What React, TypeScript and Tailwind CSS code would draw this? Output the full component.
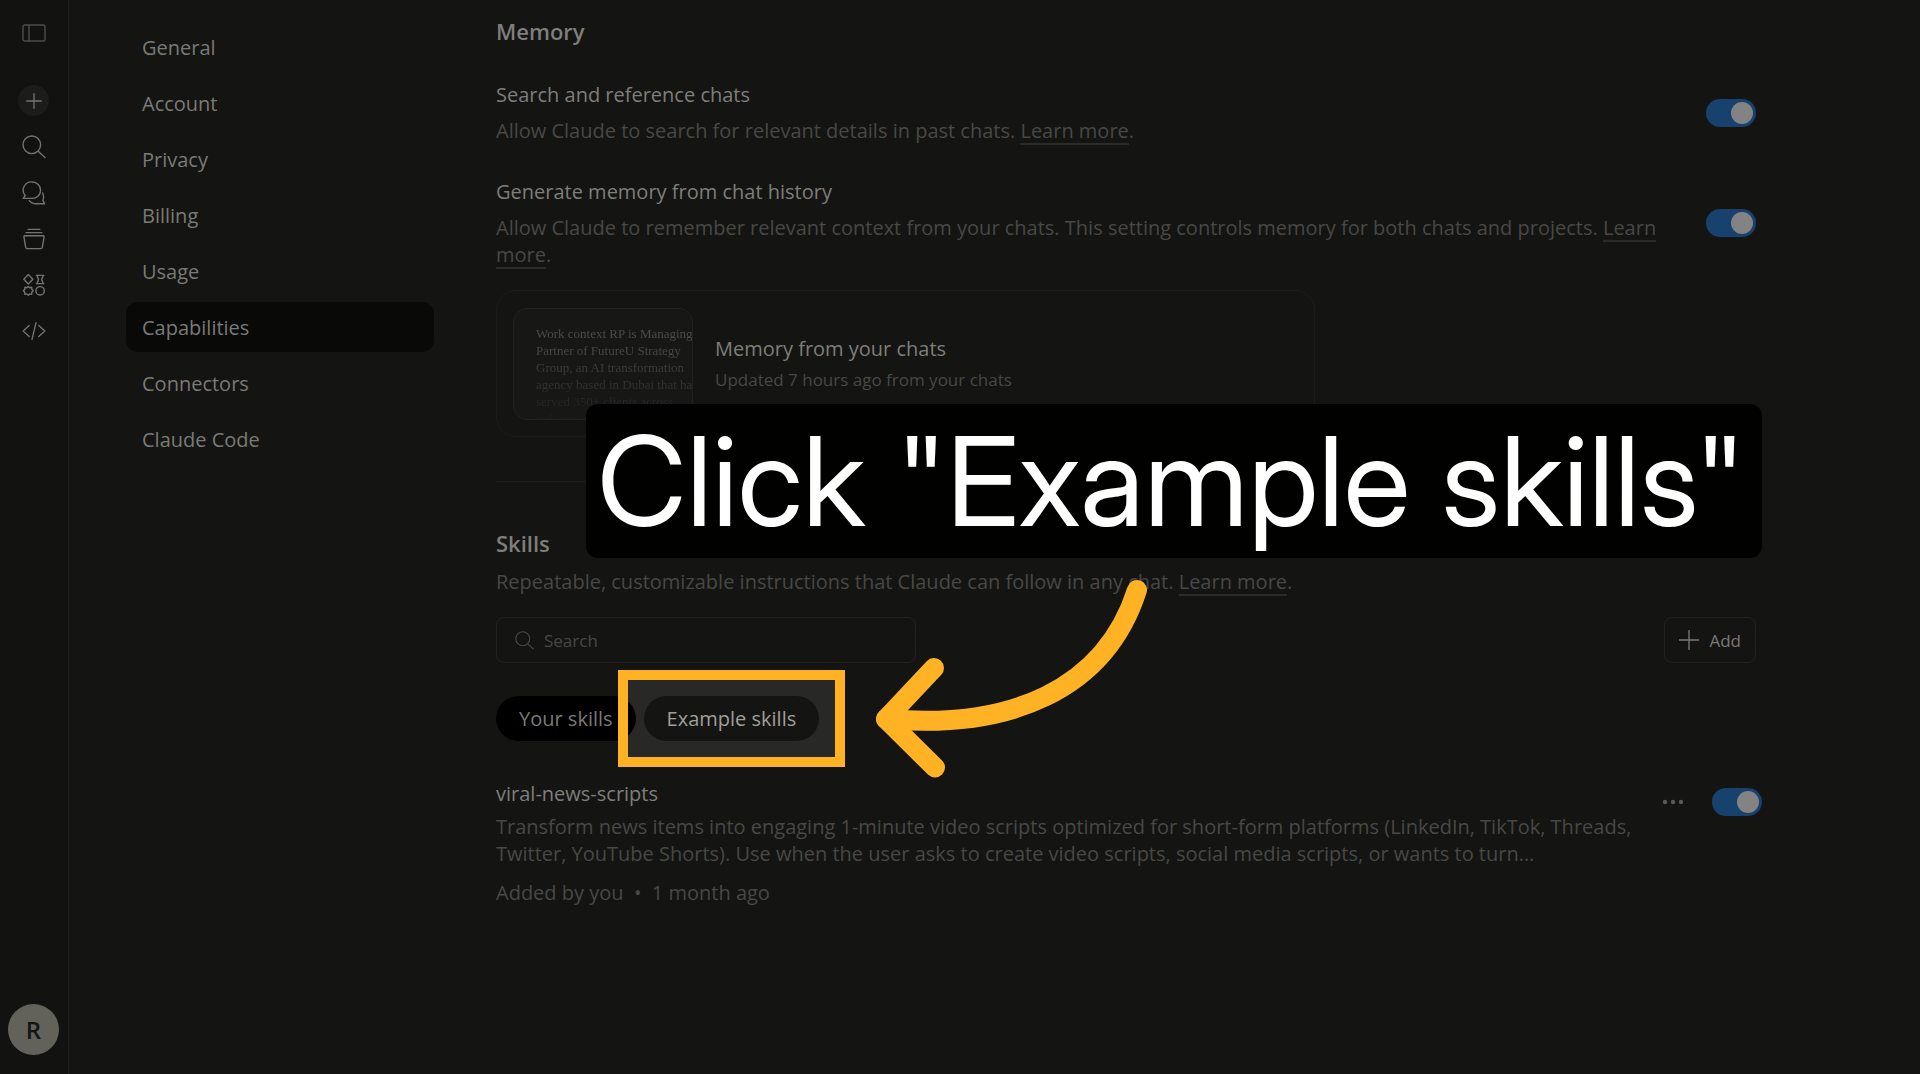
import { FC, ReactNode, useState } from "react";

const navItems = [
    "General",
    "Account",
    "Privacy",
    "Billing",
    "Usage",
    "Capabilities",
    "Connectors",
    "Claude Code",
];

const Icon: FC<{ children: ReactNode; className?: string }> = ({ children, className }) => (
    <svg
        viewBox="0 0 24 24"
        fill="none"
        stroke="currentColor"
        strokeWidth={1.4}
        strokeLinecap="round"
        strokeLinejoin="round"
        className={className ?? "size-6"}
        aria-hidden="true"
    >
        {children}
    </svg>
);

const SearchIcon: FC<{ className?: string }> = ({ className }) => (
    <Icon className={className}>
        <circle cx="9.8" cy="9.8" r="8.8" />
        <path d="M16.2 16.2 23 22.6" />
    </Icon>
);

const railItems = [
    {
        label: "Search",
        icon: <SearchIcon />,
    },
    {
        label: "Chats",
        icon: (
            <Icon>
                <path d="M10.4 1a8.2 8.2 0 1 1 0 16.4H1.2l2-2.9A8.2 8.2 0 0 1 10.4 1Z" />
                <path d="M20.8 12c1 2.4 1 5.3.1 7.6l1.7 3.1h-8.4c-3.2 0-5.6-1.3-7-3.1" />
            </Icon>
        ),
    },
    {
        label: "Projects",
        icon: (
            <Icon>
                <path d="M6.2 2.4h11.6M4 5.6h16" />
                <path d="M2.6 8.8h18.8c.5 0 .8.4.7.9l-1.8 10.7c-.1.7-.7 1.2-1.4 1.2H5.1c-.7 0-1.3-.5-1.4-1.2L1.9 9.7c-.1-.5.2-.9.7-.9Z" />
            </Icon>
        ),
    },
    {
        label: "Artifacts",
        icon: (
            <Icon>
                <path d="m6.3 1.6 4.5 4.7-4.5 4.7-4.5-4.7ZM14.4 2.4h7.4M14.4 10.6h7.4M15.2 2.4c.2 3 1.3 3 1.3 4.1s-1.1 1.2-1.3 4.1M21 2.4c-.2 3-1.3 3-1.3 4.1s1.1 1.2 1.3 4.1" />
                <circle cx="18.1" cy="17.8" r="4.2" />
                <path d="m6.3 13.4 1.4 1.3 2-.5.1 2.1 1.4 1.5-1.4 1.5-.1 2.1-2-.5-1.4 1.3-1.4-1.3-2 .5-.1-2.1-1.4-1.5 1.4-1.5.1-2.1 2 .5Z" />
            </Icon>
        ),
    },
    {
        label: "Code",
        icon: (
            <Icon>
                <path d="M7.2 6.4 1.2 12l6 5.6M16.8 6.4l6 5.6-6 5.6M14 3.6 10 20.4" />
            </Icon>
        ),
    },
];

const Toggle: FC<{ label: string }> = ({ label }) => {
    const [on, setOn] = useState<boolean>(true);
    return (
        <label className="relative block h-7 w-[50px] shrink-0 cursor-pointer">
            <input
                type="checkbox"
                role="switch"
                aria-label={label}
                checked={on}
                onChange={(e) => setOn(e.target.checked)}
                className="peer absolute inset-0 size-full cursor-pointer appearance-none rounded-full bg-[#2b2b29] checked:bg-[#17426d]"
            />
            <span className="pointer-events-none absolute top-[3px] left-[3px] size-[22px] rounded-full bg-[#838383] peer-checked:left-[25px]" />
        </label>
    );
};

const TextLink: FC<{ children: ReactNode }> = ({ children }) => (
    <a href="#learn" className="underline decoration-[#2b2b2a] decoration-2 underline-offset-[5px]">
        {children}
    </a>
);

const Rail: FC = () => (
    <aside className="flex w-[69px] shrink-0 flex-col items-center border-r border-[#1d1d1c] bg-[#121211] pt-[21px] pr-px pb-[19px] text-[#73736f]">
        <button type="button" aria-label="Toggle sidebar" className="text-[#4d4d4a]">
            <Icon>
                <rect x="1" y="4" width="22" height="16" rx="1.8" />
                <path d="M7 4v16" />
            </Icon>
        </button>
        <button
            type="button"
            aria-label="New chat"
            className="mt-10 flex size-[31px] items-center justify-center rounded-full bg-[#1c1c1b]"
        >
            <Icon className="size-4">
                <path d="M12 1v22M1 12h22" strokeWidth="2" />
            </Icon>
        </button>
        <div className="mt-[19px] flex flex-col gap-[22px]">
            {railItems.map((item) => (
                <button key={item.label} type="button" aria-label={item.label}>
                    {item.icon}
                </button>
            ))}
        </div>
        <button
            type="button"
            className="mt-auto flex size-[51px] items-center justify-center rounded-full bg-[#62625b] text-2xl font-semibold text-[#141412]"
        >
            R
        </button>
    </aside>
);

const SettingRow: FC<{ title: string; children: ReactNode }> = ({ title, children }) => (
    <div className="flex items-center justify-between gap-10">
        <div>
            <h3 className="text-[#7e7e7a]">{title}</h3>
            <p className="mt-[9px]">{children}</p>
        </div>
        <Toggle label={title} />
    </div>
);

const App: FC = () => {
    const [active, setActive] = useState<string>("Capabilities");

    return (
        <div className="flex min-h-screen overflow-hidden bg-[#141412] font-['Open_Sans',sans-serif] text-xl leading-[27px] text-[#484846]">
            <Rail />
            <div className="flex min-w-0 flex-1 gap-[62px] pr-[164px] pl-[57px]">
                <nav className="flex w-[308px] shrink-0 flex-col gap-1.5 pt-[22px]">
                    {navItems.map((item) => (
                        <a
                            key={item}
                            href="#settings"
                            onClick={() => setActive(item)}
                            className={`flex h-[50px] items-center rounded-xl px-4 text-[#7a7a76] ${active === item && "bg-[#090908]"
                                }`}
                        >
                            {item}
                        </a>
                    ))}
                </nav>

                <main className="relative min-w-0 flex-1 pt-[17px]">
                    <h2 className="text-[22px] leading-7 font-semibold text-[#7e7e7a]">Memory</h2>
                    <div className="mt-9 flex flex-col gap-[34px]">
                        <SettingRow title="Search and reference chats">
                            Allow Claude to search for relevant details in past chats. <TextLink>Learn more</TextLink>.
                        </SettingRow>
                        <SettingRow title="Generate memory from chat history">
                            Allow Claude to remember relevant context from your chats. This setting controls memory for
                            both chats and projects. <TextLink>Learn more</TextLink>.
                        </SettingRow>
                    </div>

                    <div className="mt-[22px] flex h-[147px] max-w-[819px] items-center gap-[22px] rounded-[20px] border border-[#1c1c1b] px-4">
                        <div className="h-[112px] w-[180px] shrink-0 overflow-hidden rounded-[14px] border border-[#21211f] bg-[#171716] pt-4 pl-[22px]">
                            <p className="bg-linear-to-b from-[#4c4c49] from-20% to-[#171716] bg-clip-text font-['Liberation_Serif',serif] text-[13px] leading-[17px] whitespace-nowrap text-transparent">
                                Work context RP is Managing
                                <br />
                                Partner of FutureU Strategy
                                <br />
                                Group, an AI transformation
                                <br />
                                agency based in Dubai that has
                                <br />
                                served 350+ clients across
                                <br />
                                industries
                            </p>
                        </div>
                        <div>
                            <h3 className="text-[#7e7e7a]">Memory from your chats</h3>
                            <p className="mt-1 text-[17px]">Updated 7 hours ago from your chats</p>
                        </div>
                    </div>

                    <hr className="mt-11 border-[#1d1d1c]" />

                    <h2 className="mt-[47px] text-[22px] leading-7 font-semibold text-[#7e7e7a]">Skills</h2>
                    <p className="mt-[11px]">
                        Repeatable, customizable instructions that Claude can follow in any chat.{" "}
                        <TextLink>Learn more</TextLink>.
                    </p>

                    <div className="mt-[22px] flex items-center justify-between">
                        <label className="flex h-[46px] w-[420px] items-center gap-2.5 rounded-lg border border-[#232321] px-[18px]">
                            <SearchIcon className="size-[19px]" />
                            <input
                                type="text"
                                aria-label="Search"
                                placeholder="Search"
                                className="min-w-0 flex-1 bg-transparent text-[17px] outline-none placeholder:text-[#484846]"
                            />
                        </label>
                        <button
                            type="button"
                            className="flex h-[46px] items-center gap-2.5 rounded-lg border border-[#232321] px-3.5 text-[17px] text-[#7a7a76]"
                        >
                            <Icon className="size-5">
                                <path d="M12 0v24M0 12h24" strokeWidth="1.6" />
                            </Icon>
                            Add
                        </button>
                    </div>

                    <div className="mt-[33px] flex gap-2">
                        <button
                            type="button"
                            className="relative z-10 h-[45px] rounded-full bg-black px-[23px] text-[#7a7a76]"
                        >
                            Your skills
                        </button>
                        <div className="relative">
                            <div className="absolute -inset-[26px] bg-[#282827]" />
                            <button
                                type="button"
                                className="relative h-[45px] rounded-full bg-[#141413] px-[23px] text-[#a09f98]"
                            >
                                Example skills
                            </button>
                            <div className="pointer-events-none absolute -inset-[26px] z-20 border-10 border-[#ffb224]" />
                        </div>
                    </div>

                    <div className="mt-[39px] -mr-1.5 flex items-start justify-between">
                        <div className="max-w-[1150px]">
                            <h3 className="text-[#7e7e7a]">viral-news-scripts</h3>
                            <p className="mt-1.5 line-clamp-2">
                                Transform news items into engaging 1-minute video scripts optimized for short-form
                                platforms (LinkedIn, TikTok, Threads, Twitter, YouTube Shorts). Use when the user asks
                                to create video scripts, social media scripts, or wants to turn…
                            </p>
                            <p className="mt-3">Added by you&nbsp; • &nbsp;1 month ago</p>
                        </div>
                        <div className="mt-2 flex items-center gap-7">
                            <button type="button" aria-label="More options" className="text-[#5a5a56]">
                                <svg viewBox="0 0 22 6" fill="currentColor" className="h-1.5 w-[22px]">
                                    <circle cx="3" cy="3" r="2.2" />
                                    <circle cx="11" cy="3" r="2.2" />
                                    <circle cx="19" cy="3" r="2.2" />
                                </svg>
                            </button>
                            <Toggle label="viral-news-scripts" />
                        </div>
                    </div>

                    <div className="absolute top-[404px] -right-1.5 left-[90px] z-20 flex h-[154px] items-center justify-center rounded-xl bg-black/95 pr-1.5 font-['Inter_Display','Inter_Tight',Roboto,sans-serif] text-[124px] leading-none whitespace-nowrap text-white">
                        Click "Example skills"
                    </div>
                    <svg
                        viewBox="0 0 280 208"
                        fill="none"
                        stroke="#ffb224"
                        strokeWidth="20"
                        strokeLinecap="round"
                        strokeLinejoin="round"
                        className="pointer-events-none absolute top-[575px] left-[374px] z-20 h-[208px] w-[280px]"
                        aria-hidden="true"
                    >
                        <path d="M267 15C235 115 140 155 16 144" />
                        <path d="M64 93 16 144l49 48.5" />
                    </svg>
                </main>
            </div>
        </div>
    );
};

export default App;
